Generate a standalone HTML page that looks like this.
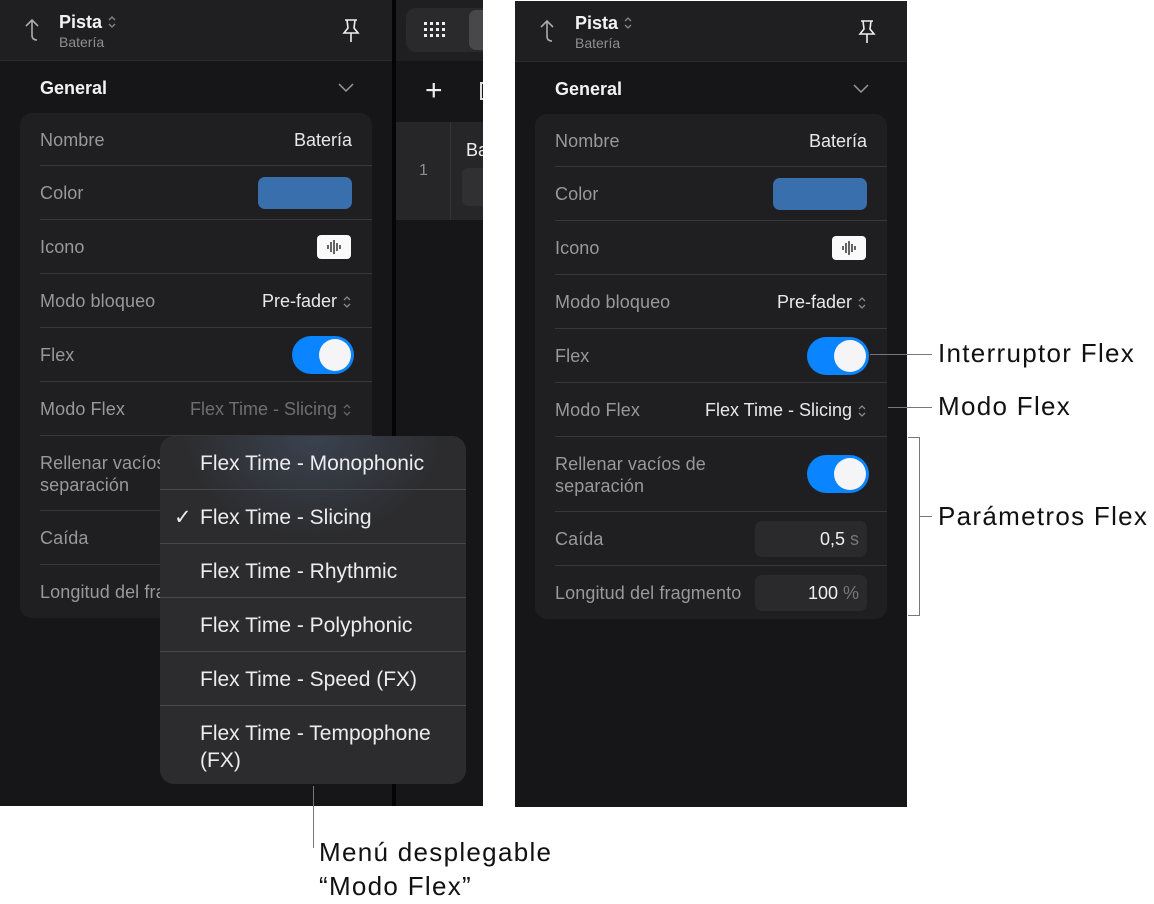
<!DOCTYPE html><html><head><meta charset="utf-8"><style>
*{margin:0;padding:0;box-sizing:border-box}
body{width:1154px;height:904px;background:#fff;position:relative;overflow:hidden;font-family:"Liberation Sans",sans-serif}
.a{position:absolute}
.panel{position:absolute;top:0;width:392px;height:806px;background:#161618}
.hdr{position:absolute;left:0;top:0;width:392px;height:61px;background:#1f1f21;border-bottom:1px solid #2a2a2c}
.card{position:absolute;left:20px;top:113px;width:352px;height:505px;background:#1f1f21;border-radius:12px}
.lbl{position:absolute;left:20px;color:#98989d;font-size:18px;letter-spacing:0.1px}
.val{position:absolute;right:20px;color:#e8e8ea;font-size:18px;display:flex;align-items:center;gap:5px}
.sep{position:absolute;left:20px;right:0;height:1px;background:#38383a}
.tog{position:absolute;right:18px;width:62px;height:38px;background:#0a84ff;border-radius:19px}
.tog:after{content:"";position:absolute;right:3px;top:3px;width:32px;height:32px;border-radius:50%;background:#f5f5f7}
.menu{position:absolute;left:160px;top:436px;width:306px;height:348px;background:#2c2c2e;border-radius:14px;overflow:hidden}
.mi{position:absolute;left:40px;color:#ececee;font-size:21px;line-height:27px}
.ms{position:absolute;left:0;right:0;height:1px;background:#48484a}
.ann{position:absolute;font-size:26px;letter-spacing:1.3px;color:#111}
.ln{position:absolute;background:#777}
.box{position:absolute;right:20px;width:112px;height:36px;background:#2a2a2c;border-radius:7px;color:#eee;font-size:18px;text-align:right;padding:8px 8px 0 0}
</style></head><body>

<div class="panel" style="left:0">
 <div class="hdr">
  <svg class="a" style="left:22px;top:18px" width="20" height="24" viewBox="0 0 20 24" fill="none" stroke="#aaa" stroke-width="1.6"><path d="M4 8 L10 2 L16 8 M10 2 V17 Q10 22 15 22"/></svg>
  <div class="a" style="left:59px;top:12px;color:#f2f2f4;font-size:18px;font-weight:bold">Pista</div>
  <svg class="a" style="left:107px;top:14px" width="10" height="16" viewBox="0 0 10 16" fill="none" stroke="#888" stroke-width="1.3"><path d="M2 6 L5 3 L8 6 M2 10 L5 13 L8 10"/></svg>
  <div class="a" style="left:59px;top:34px;color:#8e8e93;font-size:14px">Batería</div>
  <svg class="a" style="left:341px;top:18px" width="20" height="26" viewBox="0 0 20 26" fill="none" stroke="#eee" stroke-width="1.6"><path d="M4 2 H16 M6 2 L7 10 L3 15 H17 L13 10 L14 2 M10 15 V24"/></svg>
 </div>
 <div class="a" style="left:40px;top:78px;color:#f2f2f4;font-size:18px;font-weight:bold">General</div>
 <svg class="a" style="left:338px;top:83px" width="16" height="10" viewBox="0 0 16 10" fill="none" stroke="#999" stroke-width="1.5"><path d="M1 1 L8 8 L15 1"/></svg>
 <div class="card">
  <div class="lbl" style="top:17px">Nombre</div><div class="val" style="top:17px">Batería</div>
  <div class="sep" style="top:52px"></div>
  <div class="lbl" style="top:70px">Color</div><div class="a" style="right:20px;top:64px;width:94px;height:32px;background:#3a6fae;border-radius:7px"></div>
  <div class="sep" style="top:106px"></div>
  <div class="lbl" style="top:124px">Icono</div>
  <div class="a" style="right:21px;top:122px;width:34px;height:24px;background:#fafafa;border-radius:4px"><svg width="34" height="24" viewBox="0 0 34 24" stroke="#333" stroke-width="1.5"><path d="M11 10v4M14 7v10M17 5v14M20 8v8M23 10v4"/></svg></div>
  <div class="sep" style="top:160px"></div>
  <div class="lbl" style="top:178px">Modo bloqueo</div><div class="val" style="top:178px">Pre-fader <svg width="10" height="16" viewBox="0 0 10 16" fill="none" stroke="#888" stroke-width="1.3"><path d="M2 6 L5 3 L8 6 M2 10 L5 13 L8 10"/></svg></div>
  <div class="sep" style="top:214px"></div>
  <div class="lbl" style="top:232px">Flex</div><div class="tog" style="top:223px"></div>
  <div class="sep" style="top:268px"></div>
  <div class="lbl" style="top:286px">Modo Flex</div><div class="val" style="top:286px;color:#6e6e73">Flex Time - Slicing <svg width="10" height="16" viewBox="0 0 10 16" fill="none" stroke="#666" stroke-width="1.3"><path d="M2 6 L5 3 L8 6 M2 10 L5 13 L8 10"/></svg></div>
  <div class="sep" style="top:322px"></div>
  <div class="lbl" style="top:339px;line-height:22px">Rellenar vacíos de<br>separación</div>
  <div class="sep" style="top:397px"></div>
  <div class="lbl" style="top:415px">Caída</div>
  <div class="sep" style="top:451px"></div>
  <div class="lbl" style="top:469px">Longitud del fragmento</div>
 </div>
</div>
<div class="a" style="left:392px;top:0;width:4px;height:806px;background:#050505"></div>
<div class="a" style="left:396px;top:0;width:87px;height:806px;background:#161618;overflow:hidden">
 <div class="a" style="left:0;top:0;width:87px;height:61px;background:#1f1f21"></div>
 <div class="a" style="left:10px;top:8px;width:90px;height:44px;background:#2a2a2c;border-radius:10px"></div>
 <div class="a" style="left:73px;top:10px;width:30px;height:40px;background:#48484a;border-radius:7px"></div>
 <svg class="a" style="left:28px;top:22px" width="22" height="16" viewBox="0 0 22 16" fill="#eee"><g><rect x="0" y="0" width="3" height="3"/><rect x="6" y="0" width="3" height="3"/><rect x="12" y="0" width="3" height="3"/><rect x="18" y="0" width="3" height="3"/><rect x="0" y="6" width="3" height="3"/><rect x="6" y="6" width="3" height="3"/><rect x="12" y="6" width="3" height="3"/><rect x="18" y="6" width="3" height="3"/><rect x="0" y="12" width="3" height="3"/><rect x="6" y="12" width="3" height="3"/><rect x="12" y="12" width="3" height="3"/><rect x="18" y="12" width="3" height="3"/></g></svg>
 <div class="a" style="left:29px;top:74px;color:#eee;font-size:30px;font-weight:300;line-height:34px">+</div>
 <div class="a" style="left:84px;top:82px;width:8px;height:18px;border:2px solid #ddd"></div>
 <div class="a" style="left:0;top:122px;width:87px;height:98px;background:#262628"></div>
 <div class="a" style="left:54px;top:122px;width:1px;height:98px;background:#333"></div>
 <div class="a" style="left:23px;top:162px;color:#8e8e93;font-size:16px">1</div>
 <div class="a" style="left:70px;top:140px;color:#eee;font-size:18px">Ba</div>
 <div class="a" style="left:66px;top:168px;width:40px;height:38px;background:#303032;border-radius:6px"></div>
</div>

<div class="menu">
 <div class="a" style="left:0;top:0;width:306px;height:120px;background:radial-gradient(ellipse at 50% 0%,#3a4250 0%,rgba(44,44,46,0) 60%)"></div>
 <div class="mi" style="top:14px">Flex Time - Monophonic</div>
 <div class="ms" style="top:53px"></div>
 <div class="a" style="left:14px;top:68px;color:#ececee;font-size:21px;line-height:27px">✓</div><div class="mi" style="top:68px">Flex Time - Slicing</div>
 <div class="ms" style="top:107px"></div>
 <div class="mi" style="top:122px">Flex Time - Rhythmic</div>
 <div class="ms" style="top:161px"></div>
 <div class="mi" style="top:176px">Flex Time - Polyphonic</div>
 <div class="ms" style="top:215px"></div>
 <div class="mi" style="top:230px">Flex Time - Speed (FX)</div>
 <div class="ms" style="top:269px"></div>
 <div class="mi" style="top:284px">Flex Time - Tempophone<br>(FX)</div>
</div>

<div class="panel" style="left:515px;top:1px">
 <div class="hdr">
  <svg class="a" style="left:22px;top:18px" width="20" height="24" viewBox="0 0 20 24" fill="none" stroke="#aaa" stroke-width="1.6"><path d="M4 8 L10 2 L16 8 M10 2 V17 Q10 22 15 22"/></svg>
  <div class="a" style="left:60px;top:12px;color:#f2f2f4;font-size:18px;font-weight:bold">Pista</div>
  <svg class="a" style="left:108px;top:14px" width="10" height="16" viewBox="0 0 10 16" fill="none" stroke="#888" stroke-width="1.3"><path d="M2 6 L5 3 L8 6 M2 10 L5 13 L8 10"/></svg>
  <div class="a" style="left:60px;top:34px;color:#8e8e93;font-size:14px">Batería</div>
  <svg class="a" style="left:342px;top:18px" width="20" height="26" viewBox="0 0 20 26" fill="none" stroke="#eee" stroke-width="1.6"><path d="M4 2 H16 M6 2 L7 10 L3 15 H17 L13 10 L14 2 M10 15 V24"/></svg>
 </div>
 <div class="a" style="left:40px;top:78px;color:#f2f2f4;font-size:18px;font-weight:bold">General</div>
 <svg class="a" style="left:338px;top:83px" width="16" height="10" viewBox="0 0 16 10" fill="none" stroke="#999" stroke-width="1.5"><path d="M1 1 L8 8 L15 1"/></svg>
 <div class="card">
  <div class="lbl" style="top:17px">Nombre</div><div class="val" style="top:17px">Batería</div>
  <div class="sep" style="top:52px"></div>
  <div class="lbl" style="top:70px">Color</div><div class="a" style="right:20px;top:64px;width:94px;height:32px;background:#3a6fae;border-radius:7px"></div>
  <div class="sep" style="top:106px"></div>
  <div class="lbl" style="top:124px">Icono</div>
  <div class="a" style="right:21px;top:122px;width:34px;height:24px;background:#fafafa;border-radius:4px"><svg width="34" height="24" viewBox="0 0 34 24" stroke="#333" stroke-width="1.5"><path d="M11 10v4M14 7v10M17 5v14M20 8v8M23 10v4"/></svg></div>
  <div class="sep" style="top:160px"></div>
  <div class="lbl" style="top:178px">Modo bloqueo</div><div class="val" style="top:178px">Pre-fader <svg width="10" height="16" viewBox="0 0 10 16" fill="none" stroke="#888" stroke-width="1.3"><path d="M2 6 L5 3 L8 6 M2 10 L5 13 L8 10"/></svg></div>
  <div class="sep" style="top:214px"></div>
  <div class="lbl" style="top:232px">Flex</div><div class="tog" style="top:223px"></div>
  <div class="sep" style="top:268px"></div>
  <div class="lbl" style="top:286px">Modo Flex</div><div class="val" style="top:286px">Flex Time - Slicing <svg width="10" height="16" viewBox="0 0 10 16" fill="none" stroke="#888" stroke-width="1.3"><path d="M2 6 L5 3 L8 6 M2 10 L5 13 L8 10"/></svg></div>
  <div class="sep" style="top:322px"></div>
  <div class="lbl" style="top:339px;line-height:22px">Rellenar vacíos de<br>separación</div><div class="tog" style="top:341px"></div>
  <div class="sep" style="top:397px"></div>
  <div class="lbl" style="top:415px">Caída</div>
  <div class="box" style="top:407px">0,5 <span style="color:#777">s</span></div>
  <div class="sep" style="top:451px"></div>
  <div class="lbl" style="top:469px">Longitud del fragmento</div>
  <div class="box" style="top:461px">100 <span style="color:#777">%</span></div>
 </div>
</div>

<div class="ln" style="left:870px;top:354px;width:62px;height:1px"></div>
<div class="ann" style="left:938px;top:338px">Interruptor Flex</div>
<div class="ln" style="left:888px;top:407px;width:44px;height:1px"></div>
<div class="ann" style="left:938px;top:391px">Modo Flex</div>
<div class="ln" style="left:908px;top:437px;width:12px;height:1px"></div>
<div class="ln" style="left:919px;top:437px;width:1px;height:179px"></div>
<div class="ln" style="left:908px;top:615px;width:12px;height:1px"></div>
<div class="ln" style="left:920px;top:516px;width:12px;height:1px"></div>
<div class="ann" style="left:938px;top:501px">Parámetros Flex</div>
<div class="ln" style="left:313px;top:786px;width:1px;height:62px"></div>
<div class="ann" style="left:319px;top:835px;line-height:34px">Menú desplegable<br>“Modo Flex”</div>
</body></html>
